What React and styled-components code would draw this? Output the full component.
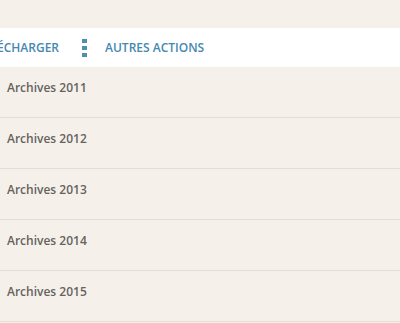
import React from "react";
import styled, { createGlobalStyle } from "styled-components";

const Global = createGlobalStyle`
  html, body {
    margin: 0;
    padding: 0;
    background: #f5f1ea;
  }
  body {
    font-family: "Open Sans", Lato, sans-serif;
    width: 400px;
    height: 323px;
    overflow: hidden;
  }
`;

const Page = styled.div`
  padding-top: 28px;
`;

const Toolbar = styled.div`
  display: flex;
  align-items: center;
  height: 39px;
  background: #ffffff;
  overflow: hidden;
`;

const Action = styled.a`
  flex: none;
  font-size: 12px;
  font-weight: 600;
  color: #4588b0;
  text-transform: uppercase;
  text-decoration: none;
  white-space: nowrap;
  margin-left: ${(p) => p.$shift || 0}px;
`;

const Dots = styled.span`
  flex: none;
  display: flex;
  flex-direction: column;
  gap: 3px;
  margin: 0 18px 0 23px;
  span {
    display: block;
    width: 5px;
    height: 4px;
    background: #4f8fb0;
  }
`;

const List = styled.ul`
  list-style: none;
  margin: 0;
  padding: 0;
`;

const Row = styled.li`
  height: 51px;
  border-bottom: 1px solid #e3ded5;
  padding: 12px 7px 0;
  box-sizing: border-box;
  font-size: 12px;
  font-weight: 600;
  color: #66625f;
`;

const years = [2011, 2012, 2013, 2014, 2015];

export default function App() {
  return (
    <Page>
      <Global />
      <Toolbar>
        <Action href="#" $shift={-3}>Écharger</Action>
        <Dots>
          <span />
          <span />
          <span />
        </Dots>
        <Action href="#">Autres actions</Action>
      </Toolbar>
      <List>
        {years.map((y) => (
          <Row key={y}>Archives {y}</Row>
        ))}
      </List>
    </Page>
  );
}
